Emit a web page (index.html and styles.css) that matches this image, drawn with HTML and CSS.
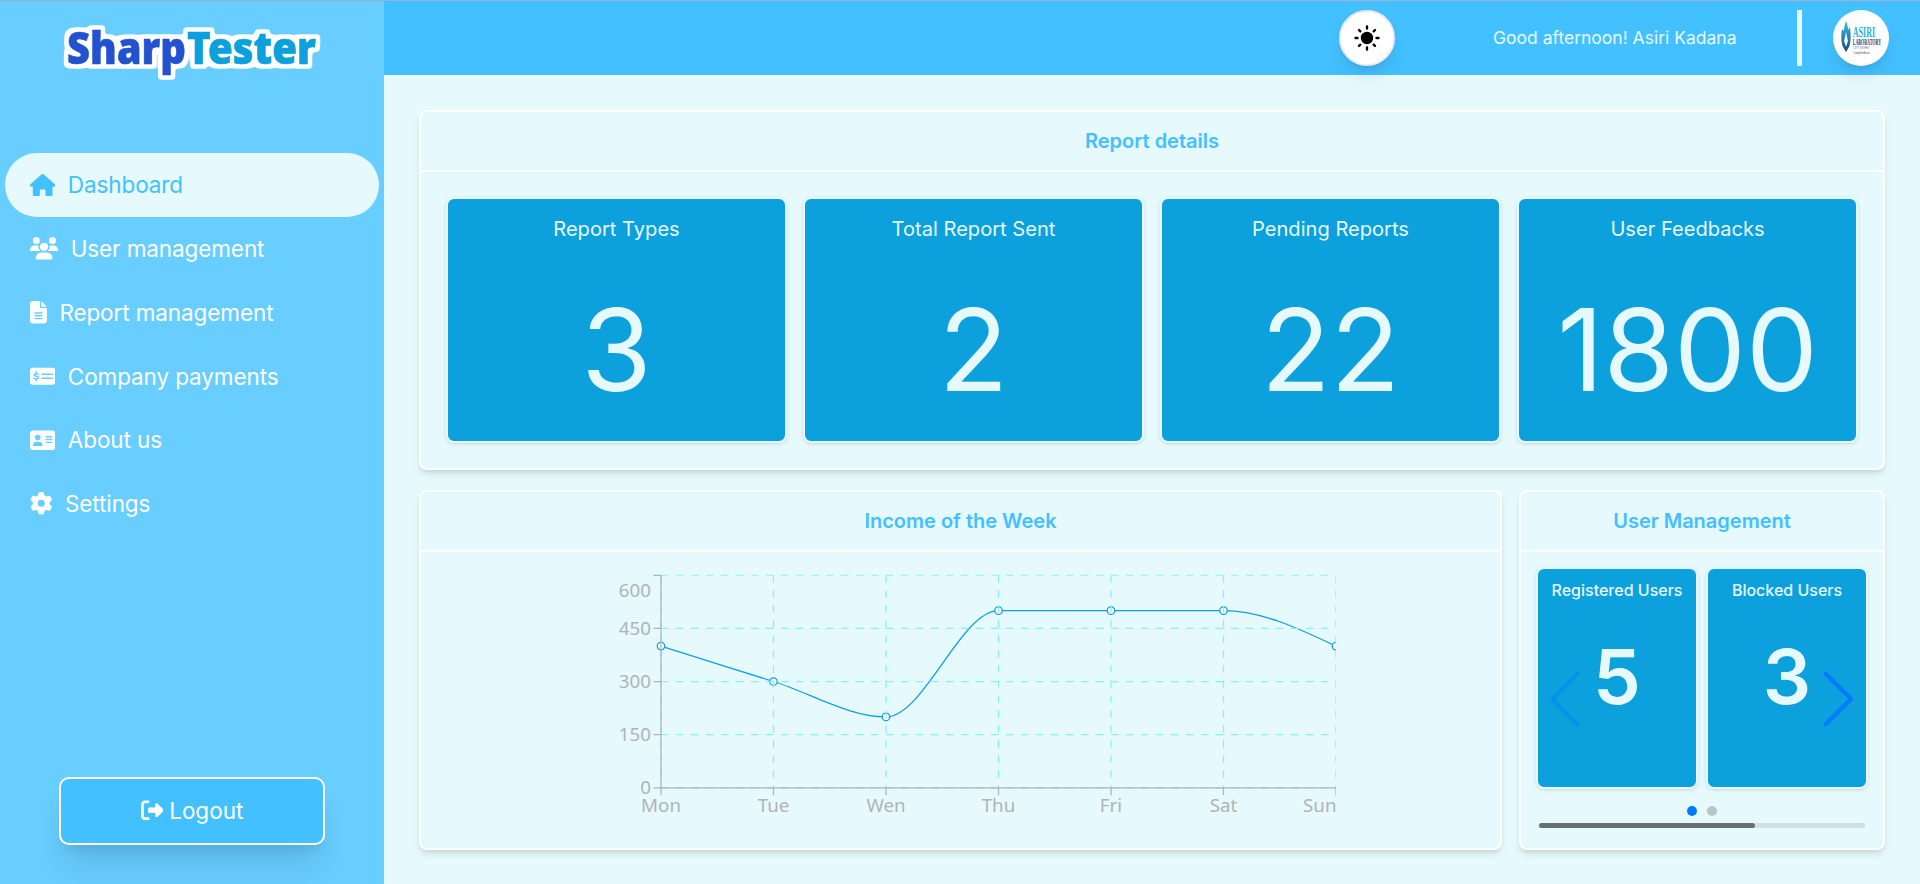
FILE: index.html
```html
<!DOCTYPE html>
<html lang="en">
<head>
<meta charset="utf-8">
<title>SharpTester Dashboard</title>
<link rel="stylesheet" href="styles.css">
</head>
<body>
<div class="app">
  <aside class="sidebar">
    <svg class="logo" width="270" height="64" viewBox="0 0 270 64">
      <defs>
        <filter id="sticker" x="-10" y="-10" width="290" height="84" filterUnits="userSpaceOnUse" color-interpolation-filters="sRGB">
          <feMorphology in="SourceAlpha" operator="dilate" radius="4"/>
          <feGaussianBlur stdDeviation="1.800"/>
          <feComponentTransfer result="m"><feFuncA type="linear" slope="4" intercept="-1"/></feComponentTransfer>
          <feFlood flood-color="#fff"/>
          <feComposite in2="m" operator="in" result="edge"/>
          <feMerge><feMergeNode in="edge"/><feMergeNode in="SourceGraphic"/></feMerge>
        </filter>
      </defs>
      <g filter="url(#sticker)">
        <text class="logo-sharp" x="10" y="47.500" textLength="119" lengthAdjust="spacingAndGlyphs">Sharp</text>
        <text class="logo-tester" x="130" y="47.500" textLength="129" lengthAdjust="spacingAndGlyphs">Tester</text>
      </g>
    </svg>
    <nav class="nav">
      <a class="nav-item active"><svg class="icon" viewBox="0 0 576 512"><path d="M575.8 255.5c0 18-15 32.1-32 32.1h-32l.7 160.2c0 2.7-.2 5.4-.5 8.1V472c0 22.1-17.9 40-40 40H456c-1.1 0-2.2 0-3.3-.1c-1.4 .1-2.8 .1-4.2 .1H416 392c-22.1 0-40-17.9-40-40V448 384c0-17.7-14.3-32-32-32H256c-17.7 0-32 14.3-32 32v64 24c0 22.1-17.9 40-40 40H160 128.1c-1.5 0-3-.1-4.5-.2c-1.2 .1-2.4 .2-3.6 .2H104c-22.1 0-40-17.9-40-40V360c0-.9 0-1.9 .1-2.8V287.6H32c-18 0-32-14-32-32.1c0-9 3-17 10-24L266.4 8c7-7 15-8 22-8s15 2 21 7L564.8 231.5c8 7 12 15 11 24z"/></svg><span>Dashboard</span></a>
      <a class="nav-item"><svg class="icon" viewBox="0 0 640 512"><path d="M144 0a80 80 0 1 1 0 160A80 80 0 1 1 144 0zM512 0a80 80 0 1 1 0 160A80 80 0 1 1 512 0zM0 298.7C0 239.8 47.8 192 106.7 192h42.7c15.9 0 31 3.5 44.6 9.7c-1.3 7.2-1.9 14.7-1.9 22.3c0 38.2 16.8 72.5 43.3 96c-.2 0-.4 0-.7 0H21.3C9.6 320 0 310.4 0 298.7zM405.3 320c-.2 0-.4 0-.7 0c26.6-23.5 43.3-57.8 43.3-96c0-7.6-.7-15-1.9-22.3c13.6-6.3 28.7-9.7 44.6-9.7h42.7C592.2 192 640 239.8 640 298.7c0 11.8-9.6 21.3-21.3 21.3H405.3zM224 224a96 96 0 1 1 192 0 96 96 0 1 1 -192 0zM128 485.3C128 411.7 187.7 352 261.3 352H378.7C452.3 352 512 411.7 512 485.3c0 14.7-11.9 26.7-26.7 26.7H154.7c-14.7 0-26.7-11.9-26.7-26.7z"/></svg><span>User management</span></a>
      <a class="nav-item"><svg class="icon" viewBox="0 0 384 512"><path d="M64 0C28.7 0 0 28.7 0 64V448c0 35.3 28.7 64 64 64H320c35.3 0 64-28.7 64-64V160H256c-17.7 0-32-14.3-32-32V0H64zM256 0V128H384L256 0zM112 256H272c8.8 0 16 7.2 16 16s-7.2 16-16 16H112c-8.8 0-16-7.2-16-16s7.2-16 16-16zm0 64H272c8.8 0 16 7.2 16 16s-7.2 16-16 16H112c-8.8 0-16-7.2-16-16s7.2-16 16-16zm0 64H272c8.8 0 16 7.2 16 16s-7.2 16-16 16H112c-8.8 0-16-7.2-16-16s7.2-16 16-16z"/></svg><span>Report management</span></a>
      <a class="nav-item"><svg class="icon" viewBox="0 0 576 512"><rect y="64" width="576" height="384" rx="60"/><g class="cut"><path d="M272 208H512M272 304H512"/><path d="M198 212C180 196 96 184 94 224C92 268 198 246 196 290C192 330 108 316 88 298M142 152V190M142 320V358"/></g></svg><span>Company payments</span></a>
      <a class="nav-item"><svg class="icon" viewBox="0 0 576 512"><path fill-rule="evenodd" d="M64 32C28.7 32 0 60.700 0 96V416c0 35.300 28.700 64 64 64H512c35.300 0 64-28.700 64-64V96c0-35.300-28.700-64-64-64H64zM176 128a64 64 0 1 1 0 128a64 64 0 1 1 0-128zM144 288h64c44.200 0 80 35.800 80 80c0 8.800-7.200 16-16 16H80c-8.800 0-16-7.200-16-16c0-44.200 35.800-80 80-80zM368 160h128a16 16 0 0 1 0 32H368a16 16 0 0 1 0-32zM368 224h128a16 16 0 0 1 0 32H368a16 16 0 0 1 0-32zM368 288h128a16 16 0 0 1 0 32H368a16 16 0 0 1 0-32z"/></svg><span>About us</span></a>
      <a class="nav-item"><svg class="icon" viewBox="0 0 512 512"><path d="M495.900 166.600c3.200 8.700 .5 18.400-6.400 24.600l-43.300 39.400c1.100 8.300 1.700 16.800 1.700 25.400s-.6 17.100-1.700 25.400l43.300 39.400c6.900 6.200 9.600 15.900 6.400 24.600c-4.400 11.900-9.700 23.300-15.800 34.300l-4.700 8.100c-6.600 11-14 21.400-22.100 31.200c-5.900 7.200-15.700 9.600-24.500 6.800l-55.700-17.700c-13.400 10.300-28.200 18.900-44 25.400l-12.500 57.100c-2 9.100-9 16.300-18.200 17.800c-13.800 2.300-28 3.500-42.500 3.500s-28.700-1.200-42.500-3.500c-9.200-1.500-16.200-8.700-18.200-17.800l-12.500-57.100c-15.800-6.500-30.600-15.100-44-25.400L83.100 425.900c-8.800 2.800-18.600 .3-24.500-6.800c-8.100-9.800-15.500-20.200-22.100-31.200l-4.700-8.100c-6.100-11-11.400-22.400-15.800-34.300c-3.200-8.700-.5-18.400 6.400-24.600l43.300-39.400C64.600 273.100 64 264.600 64 256s.6-17.100 1.700-25.400L22.400 191.200c-6.900-6.200-9.600-15.900-6.400-24.600c4.400-11.900 9.700-23.300 15.800-34.300l4.700-8.100c6.600-11 14-21.400 22.100-31.200c5.900-7.200 15.700-9.600 24.500-6.800l55.700 17.700c13.400-10.300 28.200-18.900 44-25.400l12.500-57.100c2-9.100 9-16.300 18.200-17.800C227.300 1.200 241.500 0 256 0s28.700 1.200 42.500 3.500c9.200 1.500 16.200 8.700 18.200 17.800l12.500 57.100c15.800 6.500 30.600 15.100 44 25.400l55.700-17.700c8.800-2.800 18.600-.3 24.500 6.800c8.100 9.800 15.500 20.200 22.100 31.200l4.700 8.100c6.100 11 11.400 22.400 15.800 34.300zM256 336a80 80 0 1 0 0-160 80 80 0 1 0 0 160z"/></svg><span>Settings</span></a>
    </nav>
    <button class="logout"><svg class="icon" viewBox="0 0 512 512"><path d="M377.900 105.900L500.700 228.700c7.200 7.200 11.300 17.100 11.300 27.300s-4.100 20.100-11.300 27.300L377.900 406.100c-6.400 6.400-15 9.900-24 9.900c-18.700 0-33.900-15.200-33.900-33.900l0-62.100-128 0c-17.700 0-32-14.300-32-32l0-64c0-17.700 14.300-32 32-32l128 0 0-62.100c0-18.700 15.200-33.900 33.900-33.900c9 0 17.600 3.600 24 9.900zM160 96L96 96c-17.700 0-32 14.300-32 32l0 256c0 17.700 14.300 32 32 32l64 0c17.700 0 32 14.300 32 32s-14.300 32-32 32l-64 0c-53 0-96-43-96-96L0 128C0 75 43 32 96 32l64 0c17.700 0 32 14.300 32 32s-14.300 32-32 32z"/></svg><span>Logout</span></button>
  </aside>

  <div class="page">
    <header class="topbar">
      <button class="round theme">
        <svg width="28" height="28" viewBox="-14 -14 28 28"><circle r="6.200"/><path class="rays" d="M0-9.500V-11.500M0 9.500V11.500M-9.500 0H-11.500M9.500 0H11.500M6.700-6.700L8-8M-6.700-6.700L-8-8M6.700 6.700L8 8M-6.700 6.700L-8 8"/></svg>
      </button>
      <span class="greeting">Good afternoon! Asiri Kadana</span>
      <span class="divider"></span>
      <span class="round avatar">
        <svg width="56" height="56" viewBox="0 0 56 56">
          <defs><linearGradient id="flame" x1="0" y1="0" x2="0" y2="1"><stop offset="0" stop-color="#35c5e0"/><stop offset="1" stop-color="#1b4478"/></linearGradient></defs>
          <path fill="url(#flame)" d="M13 11C14 14 15 16 15 20L17 17C18 24 18 33 16 37L13 42L10 37C8 33 8 24 9 19L11 21C11 17 12 14 13 11Z"/>
          <path fill="#e6f8fd" d="M13 22L15 31L13 37L11 31Z"/>
          <text class="av-name" x="19.700" y="26.500" textLength="22.500" lengthAdjust="spacingAndGlyphs">ASIRI</text>
          <text class="av-lab" x="19.700" y="35" textLength="28.500" lengthAdjust="spacingAndGlyphs">LABORATORY</text>
          <text class="av-tiny" x="20" y="39" textLength="16">CITY WORK</text>
          <text class="av-tiny" x="20" y="43.500" textLength="17">Caring Healthcare</text>
        </svg>
      </span>
    </header>

    <main class="content">
      <section class="panel">
        <h2 class="panel-title">Report details</h2>
        <div class="stats">
          <div class="stat"><h3>Report Types</h3><p>3</p></div>
          <div class="stat"><h3>Total Report Sent</h3><p>2</p></div>
          <div class="stat"><h3>Pending Reports</h3><p>22</p></div>
          <div class="stat"><h3>User Feedbacks</h3><p>1800</p></div>
        </div>
      </section>

      <div class="row">
        <section class="panel income">
          <h2 class="panel-title">Income of the Week</h2>
          <svg class="chart" viewBox="0 0 600 210">
            <path class="line" d="M60 61.670C90 71.110 120 80.560 150 90C180 99.440 210 118.330 240 118.330C270 118.330 300 33.330 330 33.330L510 33.330C540 33.330 570 47.500 600 61.670"/>
            <g class="dots"><circle cx="60" cy="61.670" r="3"/><circle cx="150" cy="90" r="3"/><circle cx="240" cy="118.330" r="3"/><circle cx="330" cy="33.330" r="3"/><circle cx="420" cy="33.330" r="3"/><circle cx="510" cy="33.330" r="3"/><circle cx="600" cy="61.670" r="3"/></g>
            <g class="grid">
              <path class="faint" d="M60 5H600"/><path d="M60 47.500H600"/><path d="M60 90H600"/><path d="M60 132.500H600"/><path d="M60 175H600"/>
              <path d="M60 5V175"/><path d="M150 5V175"/><path d="M240 5V175"/><path d="M330 5V175"/><path d="M420 5V175"/><path d="M510 5V175"/><path d="M600 5V175"/>
            </g>
            <path class="axis" d="M60 175H600M60 5V175M54 5H60M54 47.500H60M54 90H60M54 132.500H60M54 175H60M60 175V181M150 175V181M240 175V181M330 175V181M420 175V181M510 175V181M600 175V181"/>
            <g class="ylab"><text x="52" y="22">600</text><text x="52" y="52.500">450</text><text x="52" y="95">300</text><text x="52" y="137.400">150</text><text x="52" y="180">0</text></g>
            <g class="xlab"><text x="60" y="194.300">Mon</text><text x="150" y="194.300">Tue</text><text x="240" y="194.300">Wen</text><text x="330" y="194.300">Thu</text><text x="420" y="194.300">Fri</text><text x="510" y="194.300">Sat</text><text x="587" y="194.300">Sun</text></g>
          </svg>
        </section>

        <section class="panel users">
          <h2 class="panel-title">User Management</h2>
          <div class="swiper">
            <div class="slides">
              <div class="slide"><h3>Registered Users</h3><p>5</p></div>
              <div class="slide"><h3>Blocked Users</h3><p>3</p></div>
            </div>
            <svg class="arrow prev" viewBox="0 0 30 56"><path d="M27.500 2.500L2 28L27.500 53.500"/></svg>
            <svg class="arrow next" viewBox="0 0 30 56"><path d="M2.500 2.500L28 28L2.500 53.500"/></svg>
            <div class="bullets"><i class="bullet on"></i><i class="bullet"></i></div>
            <div class="track"><div class="thumb"></div></div>
          </div>
        </section>
      </div>
    </main>
  </div>
</div>
</body>
</html>
```
FILE: styles.css
```css
* { box-sizing: border-box; margin: 0; }
body { font-family: Inter, sans-serif; background: #e6f9fd; overflow: hidden; }
.app { display: flex; height: 884px; border-top: 1px solid #93b1d3; }

.sidebar { width: 384px; flex: none; background: #68cdff; display: flex; flex-direction: column; align-items: center; padding: 15px 5px 39px; }
.logo { flex: none; font: 900 44px "Noto Sans", sans-serif; overflow: visible; }
.logo-sharp { fill: #2252cf; stroke: #2252cf; stroke-width: .6px; }
.logo-tester { fill: #0ca0dd; stroke: #0ca0dd; stroke-width: .6px; }
.nav { width: 100%; margin-top: 73px; display: flex; flex-direction: column; }
.nav-item { display: flex; align-items: center; gap: 12.500px; height: 63.750px; padding-left: 25px; border-radius: 32px; color: #fff; font-size: 22.500px; font-weight: 400; letter-spacing: -.1px; }
.nav-item.active { background: #e6f9fd; color: #43c0ff; }
.icon { height: 22.500px; fill: currentColor; }
.cut { fill: none; stroke: #68cdff; stroke-width: 34px; stroke-linecap: round; }
.logout { margin-top: auto; width: 266px; height: 68px; display: flex; align-items: center; justify-content: center; gap: 6px; border: 2px solid #fff; border-radius: 10px; background: #43c0ff; color: #fff; font: 400 22.500px Inter, sans-serif; padding-bottom: 3px; box-shadow: 0 25px 31px -6px rgba(0,0,0,.1), 0 10px 12.500px -7.500px rgba(0,0,0,.1); }

.page { flex: 1; min-width: 0; display: flex; flex-direction: column; }
.topbar { height: 74px; background: #43c0ff; display: flex; align-items: center; justify-content: flex-end; padding-right: 31px; }
.round { width: 56px; height: 56px; border-radius: 50%; background: #fff; border: 0; padding: 0; display: flex; align-items: center; justify-content: center; box-shadow: 0 12.500px 19px -4px rgba(0,0,0,.1), 0 5px 7.500px -5px rgba(0,0,0,.1); }
.theme { border: 2px solid #ece9fb; }
.rays { stroke: #000; stroke-width: 2.400px; stroke-linecap: round; }
.greeting { margin-left: 98px; width: 304px; padding-bottom: 2px; color: #e6f9fd; font-size: 17.500px; white-space: nowrap; }
.divider { width: 5px; height: 56px; background: #e6f9fd; margin-right: 31px; }
.av-name { font: 700 15px "Liberation Serif", serif; fill: #1fb5d8; }
.av-lab { font: 700 9px "Liberation Serif", serif; fill: #14467c; }
.av-tiny { font: 3px "Liberation Sans", sans-serif; fill: #777; }

.content { padding: 35px 35px 0; display: flex; flex-direction: column; gap: 20px; }
.panel { border: 2px solid #fff; border-radius: 8px; background: #e6f9fd; height: 360px; box-shadow: 0 5px 7.500px -1px rgba(0,0,0,.1), 0 2.500px 5px -2.500px rgba(0,0,0,.1); }
.panel-title { height: 60px; border-bottom: 2px solid #fff; color: #43c0ff; font-size: 20px; font-weight: 600; line-height: 58px; text-align: center; }
.stats { padding: 25px; display: grid; grid-template-columns: repeat(4, 1fr); gap: 16px; }
.stat, .slide { border: 2px solid #e6f9fd; border-radius: 8px; background: #0ca0dd; color: #e6f9fd; text-align: center; box-shadow: 0 1px 4px rgba(0,0,0,.1), 0 1px 2.500px -1px rgba(0,0,0,.1); }
.stat { height: 246px; padding-top: 17px; }
.stat h3 { font-size: 20.100px; font-weight: 400; line-height: 26px; }
.stat p { font-size: 114px; line-height: 140px; margin-top: 38px; }
.row { display: flex; gap: 17px; }
.income { width: 1083px; flex: none; }
.chart { display: block; width: 750px; height: 262.500px; margin: 17px 0 0 165px; overflow: hidden; }
.line { fill: none; stroke: #0ca0dd; }
.dots { fill: #fff; stroke: #0ca0dd; }
.grid { fill: none; stroke: #7ff3ff; stroke-dasharray: 6 6; }
.faint { stroke-opacity: .7; }
.axis { fill: none; stroke: #b3b3b3; }
.ylab, .xlab { fill: #b3b3b3; font: 15px "Noto Sans", sans-serif; }
.ylab { text-anchor: end; }
.xlab { text-anchor: middle; }

.users { flex: 1; }
.swiper { position: relative; padding: 15px; }
.slides { display: grid; grid-template-columns: 1fr 1fr; gap: 8px; }
.slide { height: 222px; padding-top: 10px; }
.slide h3 { font-size: 16px; font-weight: 500; line-height: 23px; white-space: nowrap; }
.slide p { font-size: 76px; font-weight: 600; line-height: 90px; margin-top: 29px; }
.arrow { position: absolute; top: 119px; width: 30px; height: 56px; fill: none; stroke: #007aff; stroke-width: 4px; stroke-linecap: round; stroke-linejoin: round; }
.prev { left: 29px; opacity: .35; }
.next { right: 30px; }
.bullets { display: flex; justify-content: center; gap: 10px; margin-top: 17px; }
.bullet { width: 10px; height: 10px; border-radius: 50%; background: #b8c6ca; }
.bullet.on { background: #007aff; }
.track { height: 5px; margin: 7px 3px 0; border-radius: 3px; background: #cfdfe4; }
.thumb { width: 216px; height: 5px; border-radius: 3px; background: #676f72; }
```
